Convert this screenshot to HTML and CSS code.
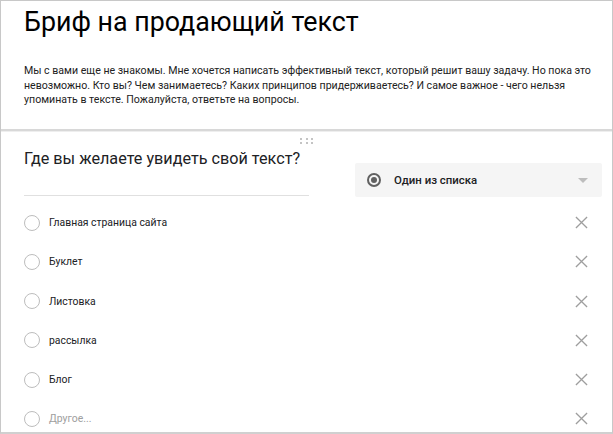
FILE: index.html
```html
<!DOCTYPE html>
<html lang="ru">
<head>
<meta charset="utf-8">
<title>Бриф на продающий текст</title>
<link rel="stylesheet" href="styles.css">
</head>
<body>
<div class="frame">
  <div class="header">
    <h1 class="title">Бриф на продающий текст</h1>
    <p class="desc">Мы с вами еще не знакомы. Мне хочется написать эффективный текст, который решит вашу задачу. Но пока это невозможно. Кто вы? Чем занимаетесь? Каких принципов придерживаетесь? И самое важное - чего нельзя упоминать в тексте. Пожалуйста, ответьте на вопросы.</p>
  </div>
  <div class="sep"></div>
  <div class="card">
    <div class="handle"><i></i><i></i><i></i><i></i><i></i><i></i></div>
    <div class="qrow">
      <div class="qleft">
        <div class="question">Где вы желаете увидеть свой текст?</div>
      </div>
      <div class="qtype">
        <span class="radio-on"></span>
        <span class="qtype-label">Один из списка</span>
        <span class="caret"></span>
      </div>
    </div>
    <div class="options">
      <div class="opt"><span class="radio"></span><span class="opt-label">Главная страница сайта</span><svg class="x" viewBox="0 0 14 14"><path d="M1 1L13 13M13 1L1 13"/></svg></div>
      <div class="opt"><span class="radio"></span><span class="opt-label">Буклет</span><svg class="x" viewBox="0 0 14 14"><path d="M1 1L13 13M13 1L1 13"/></svg></div>
      <div class="opt"><span class="radio"></span><span class="opt-label">Листовка</span><svg class="x" viewBox="0 0 14 14"><path d="M1 1L13 13M13 1L1 13"/></svg></div>
      <div class="opt"><span class="radio"></span><span class="opt-label">рассылка</span><svg class="x" viewBox="0 0 14 14"><path d="M1 1L13 13M13 1L1 13"/></svg></div>
      <div class="opt"><span class="radio"></span><span class="opt-label">Блог</span><svg class="x" viewBox="0 0 14 14"><path d="M1 1L13 13M13 1L1 13"/></svg></div>
      <div class="opt"><span class="radio"></span><span class="opt-label other">Другое...</span><svg class="x" viewBox="0 0 14 14"><path d="M1 1L13 13M13 1L1 13"/></svg></div>
    </div>
  </div>
</div>
</body>
</html>
```
FILE: styles.css
```css
* { box-sizing: border-box; }
html, body { margin: 0; padding: 0; background: #fff; }
body { font-family: Roboto, "Liberation Sans", Arial, sans-serif; color: #202124; }

.frame {
  width: 613px;
  height: 434px;
  border: 1px solid #c8c8c8;
  border-bottom: 2px solid #d0d0d0;
  overflow: hidden;
  background: #fff;
}

.header {
  height: 128px;
  padding: 4px 14px 0 23px;
}
.title {
  margin: 0;
  font-size: 26.8px;
  line-height: 34px;
  font-weight: 400;
  color: #000;
}
.desc {
  margin: 25px 0 0;
  font-size: 10.6px;
  line-height: 14.6px;
  color: #222;
}

.sep {
  height: 3px;
  background: #d8d8d8;
  border-bottom: 1px solid #eee;
}

.card { padding: 0; }

.handle {
  width: 13px;
  margin: 6px auto 0;
  display: grid;
  grid-template-columns: repeat(3, 2px);
  grid-auto-rows: 2px;
  column-gap: 3.5px;
  row-gap: 2px;
  height: 6px;
}
.handle i { display: block; background: #c4c4c4; }

.qrow {
  display: flex;
  align-items: flex-start;
  padding: 3px 0 0 23px;
}
.qleft {
  width: 285px;
  border-bottom: 1px solid #e0e0e0;
  padding-bottom: 24px;
}
.question {
  font-size: 16.2px;
  line-height: 24px;
  color: #202124;
  white-space: nowrap;
}
.qtype {
  margin: 16px 0 0 46px;
  width: 247px;
  height: 34px;
  background: #f5f5f5;
  border-radius: 2px;
  display: flex;
  align-items: center;
  padding: 0 14px 0 12px;
}
.radio-on {
  width: 14px;
  height: 14px;
  border: 2px solid #616161;
  border-radius: 50%;
  display: flex;
  align-items: center;
  justify-content: center;
  flex: none;
}
.radio-on::after {
  content: "";
  width: 6px;
  height: 6px;
  border-radius: 50%;
  background: #616161;
}
.qtype-label {
  margin-left: 13px;
  font-size: 11.4px;
  font-weight: 500;
  color: #202124;
  flex: 1;
}
.caret {
  width: 0;
  height: 0;
  border-left: 5px solid transparent;
  border-right: 5px solid transparent;
  border-top: 5px solid #bdbdbd;
}

.options { padding: 6px 0 0 23px; }
.opt {
  height: 39.25px;
  display: flex;
  align-items: center;
}
.radio {
  width: 16px;
  height: 16px;
  border: 1.5px solid #bdbdbd;
  border-radius: 50%;
  flex: none;
}
.opt-label {
  margin-left: 9px;
  font-size: 10.4px;
  color: #202124;
  flex: 1;
}
.opt-label.other { color: #9e9e9e; }
.x {
  width: 13px;
  height: 13px;
  margin-right: 24px;
  flex: none;
}
.x path { stroke: #9e9e9e; stroke-width: 1.4; fill: none; }
```
